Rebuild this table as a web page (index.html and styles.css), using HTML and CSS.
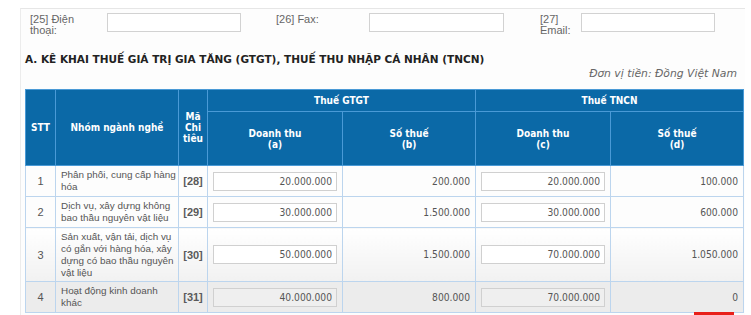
FILE: index.html
```html
<!DOCTYPE html>
<html lang="vi">
<head>
<meta charset="utf-8">
<title>Kê khai thuế</title>
<link rel="stylesheet" href="styles.css">
</head>
<body>
<div class="panel">
  <div class="contact">
    <label class="lbl lbl1">[25] Điện thoại:</label>
    <input class="field f1" type="text">
    <label class="lbl lbl2">[26] Fax:</label>
    <input class="field f2" type="text">
    <label class="lbl lbl3">[27] Email:</label>
    <input class="field f3" type="text">
  </div>
  <h2 class="heading">A. KÊ KHAI THUẾ GIÁ TRỊ GIA TĂNG (GTGT), THUẾ THU NHẬP CÁ NHÂN (TNCN)</h2>
  <div class="unit">Đơn vị tiền: Đồng Việt Nam</div>
  <table class="tax">
    <colgroup>
      <col class="c-stt"><col class="c-name"><col class="c-code"><col class="c-num"><col class="c-num2"><col class="c-num"><col class="c-num2">
    </colgroup>
    <thead>
      <tr class="h1">
        <th rowspan="2">STT</th>
        <th rowspan="2">Nhóm ngành nghề</th>
        <th rowspan="2" class="code">Mã<br>Chi<br>tiêu</th>
        <th colspan="2">Thuế GTGT</th>
        <th colspan="2">Thuế TNCN</th>
      </tr>
      <tr class="h2">
        <th>Doanh thu<br>(a)</th>
        <th>Số thuế<br>(b)</th>
        <th>Doanh thu<br>(c)</th>
        <th>Số thuế<br>(d)</th>
      </tr>
    </thead>
    <tbody>
      <tr class="r">
        <td class="stt">1</td>
        <td class="name">Phân phối, cung cấp hàng<br>hóa</td>
        <td class="code">[28]</td>
        <td class="in"><input class="num-in" type="text" value="20.000.000"></td>
        <td class="val">200.000</td>
        <td class="in"><input class="num-in" type="text" value="20.000.000"></td>
        <td class="val">100.000</td>
      </tr>
      <tr class="r">
        <td class="stt">2</td>
        <td class="name">Dịch vụ, xây dựng không<br>bao thầu nguyên vật liệu</td>
        <td class="code">[29]</td>
        <td class="in"><input class="num-in" type="text" value="30.000.000"></td>
        <td class="val">1.500.000</td>
        <td class="in"><input class="num-in" type="text" value="30.000.000"></td>
        <td class="val">600.000</td>
      </tr>
      <tr class="r tall">
        <td class="stt">3</td>
        <td class="name">Sản xuất, vận tải, dịch vụ<br>có gắn với hàng hóa, xây<br>dựng có bao thầu nguyên<br>vật liệu</td>
        <td class="code">[30]</td>
        <td class="in"><input class="num-in" type="text" value="50.000.000"></td>
        <td class="val">1.500.000</td>
        <td class="in"><input class="num-in" type="text" value="70.000.000"></td>
        <td class="val">1.050.000</td>
      </tr>
      <tr class="r hover">
        <td class="stt">4</td>
        <td class="name">Hoạt động kinh doanh<br>khác</td>
        <td class="code">[31]</td>
        <td class="in"><input class="num-in" type="text" value="40.000.000"></td>
        <td class="val">800.000</td>
        <td class="in"><input class="num-in" type="text" value="70.000.000"></td>
        <td class="val">0</td>
      </tr>
    </tbody>
  </table>
</div>
<div class="progress"></div>
</body>
</html>
```

FILE: styles.css
```css
html, body {
  margin: 0;
  padding: 0;
  background: #ffffff;
  overflow: hidden;
}
body {
  width: 751px;
  height: 315px;
  position: relative;
}
.panel {
  margin: 8px 6px 0 20px;
  border-top: 1px solid #e6e6e6;
  border-left: 1px solid #ececec;
  background: #fdfdfd;
  padding: 4px 0 0 4px;
  height: 320px;
  box-sizing: border-box;
}
.contact {
  display: flex;
  align-items: flex-start;
  padding-left: 5px;
  height: 36px;
}
.lbl {
  font-family: "Liberation Sans", Arial, sans-serif;
  font-size: 11px;
  line-height: 11px;
  color: #666;
  padding-top: 1px;
}
.lbl1 { width: 65px; margin-right: 12px; }
.lbl2 { width: 93px; }
.lbl3 { width: 30px; margin-right: 11px; }
.field {
  box-sizing: border-box;
  height: 19px;
  border: 1px solid #d2d2d2;
  background: #fff;
  margin: 0;
  padding: 0;
}
.f1 { width: 134px; margin-right: 35px; }
.f2 { width: 135px; margin-right: 36px; }
.f3 { width: 134px; }
.heading {
  margin: 4px 0 0 0;
  font-family: "DejaVu Sans", Verdana, sans-serif;
  font-weight: bold;
  font-size: 10.5px;
  line-height: 12px;
  color: #222;
}
.unit {
  margin-top: 3px;
  text-align: right;
  padding-right: 8px;
  font-family: "DejaVu Sans", Verdana, sans-serif;
  font-style: italic;
  font-size: 10.8px;
  line-height: 12px;
  color: #666;
}
.tax {
  margin-top: 9px;
  border-collapse: collapse;
  table-layout: fixed;
  width: 719px;
  border: 1px solid #c7e6f5;
}
.c-stt { width: 30px; }
.c-name { width: 123px; }
.c-code { width: 29px; }
.c-num { width: 135px; }
.c-num2 { width: 133px; }
.tax th {
  background: #0b69a7;
  color: #fff;
  font-family: "DejaVu Sans Condensed", "DejaVu Sans", sans-serif;
  font-weight: bold;
  font-size: 10px;
  line-height: 11px;
  border: 1px solid #4a9ad6;
  padding: 0;
  text-align: center;
}
.tax .h1 th { height: 21px; }
.tax .h2 th { height: 53px; }
.tax td {
  border: 1px solid #bcd5ee;
  padding: 0;
  font-family: "Liberation Sans", Arial, sans-serif;
  font-size: 11px;
  color: #555;
  height: 30px;
  vertical-align: middle;
}
.tax .tall td { height: 53px; }
.tax td.stt { text-align: center; }
.tax td.name {
  padding: 0 0 0 5px;
  line-height: 12px;
  font-size: 9.9px;
  white-space: nowrap;
}
.tax td.code {
  text-align: center;
  font-weight: bold;
  color: #5a5a5a;
}
.tax td.in { padding: 0 5px 0 5px; }
.num-in {
  box-sizing: border-box;
  width: 124px;
  height: 19px;
  border: 1px solid #d0d0d0;
  background: #fff;
  margin: 0;
  padding: 0 4px 0 0;
  text-align: right;
  font-family: "DejaVu Sans Condensed", "DejaVu Sans", sans-serif;
  font-size: 10.2px;
  color: #555;
  display: block;
}
.tax td.val {
  text-align: right;
  padding-right: 5px;
  font-family: "DejaVu Sans Condensed", "DejaVu Sans", sans-serif;
  font-size: 10.2px;
}
.tax .tall td { background: linear-gradient(#ffffff, #f1f1f1); }
.tax .hover td { background: #ececec; }
.tax .hover .num-in { background: #efefef; }
.progress {
  position: absolute;
  left: 694px;
  top: 312px;
  width: 40px;
  height: 3px;
  background: #e8201a;
}
```
